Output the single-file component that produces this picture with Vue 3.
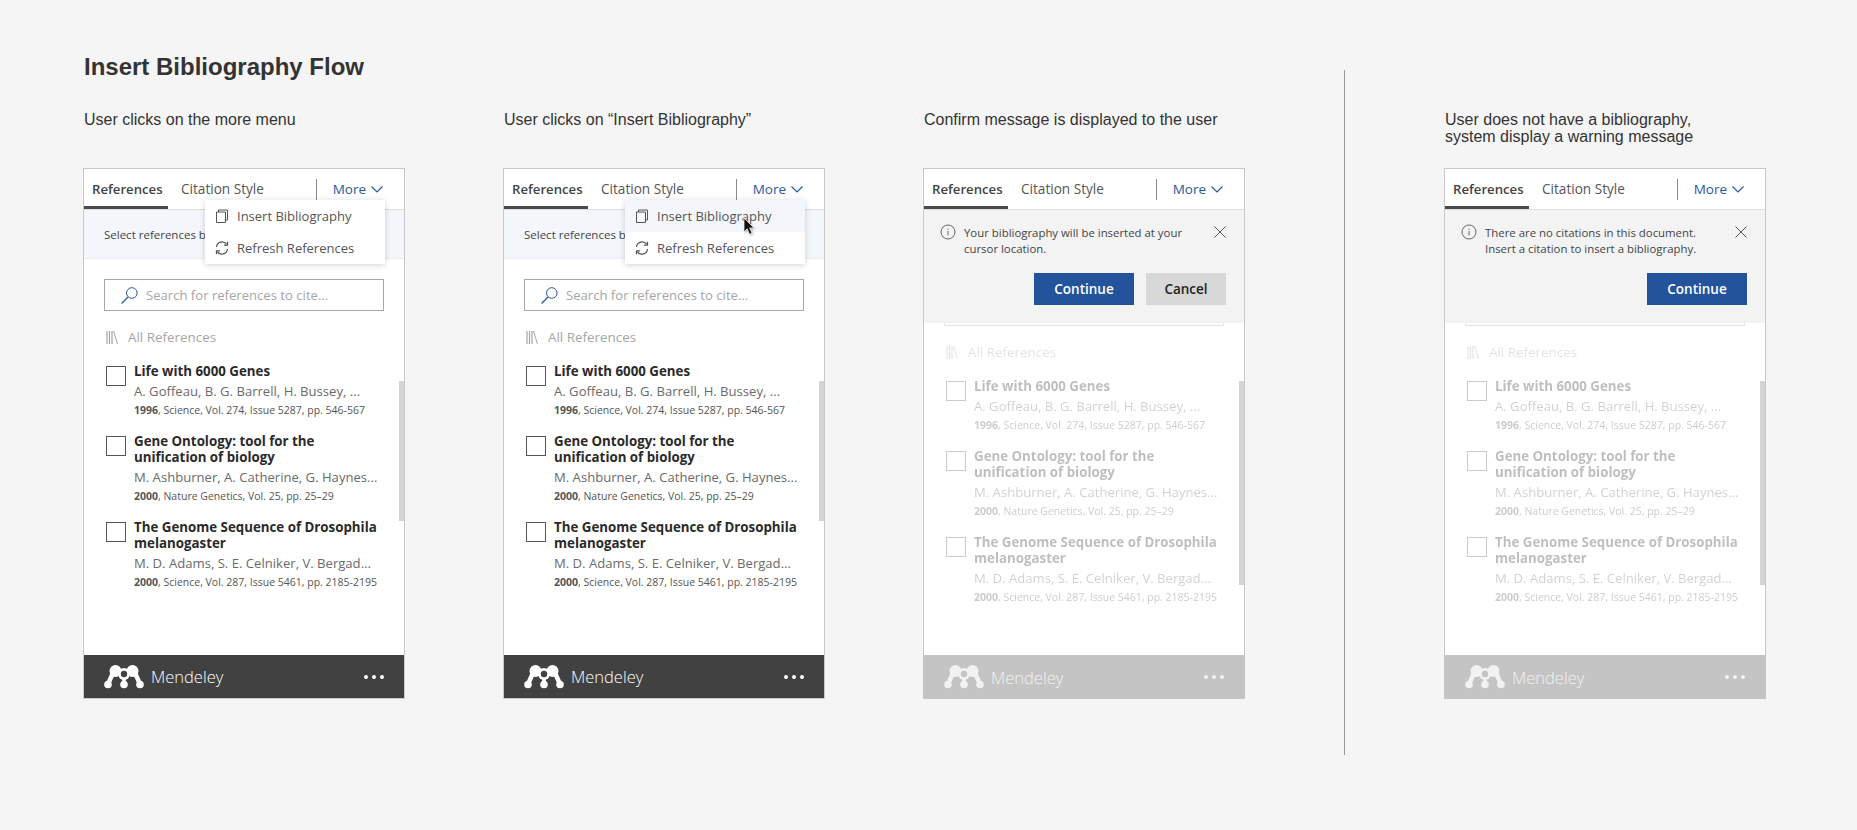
<script setup>
const items = [
  { titulo: 'Life with 6000 Genes', autores: 'A. Goffeau, B. G. Barrell, H. Bussey, ...', anio: '1996', info: ', Science, Vol. 274, Issue 5287, pp. 546-567' },
  { titulo: 'Gene Ontology: tool for the unification of biology', autores: 'M. Ashburner, A. Catherine, G. Haynes...', anio: '2000', info: ', Nature Genetics, Vol. 25, pp. 25–29' },
  { titulo: 'The Genome Sequence of Drosophila melanogaster', autores: 'M. D. Adams, S. E. Celniker, V. Bergad...', anio: '2000', info: ', Science, Vol. 287, Issue 5461, pp. 2185-2195' }
]

const paneles = [
  { caption: 'User clicks on the more menu', menu: true },
  { caption: 'User clicks on “Insert Bibliography”', menu: true, hover: true },
  { caption: 'Confirm message is displayed to the user', mensaje: 'Your bibliography will be inserted at your cursor location.', cancelar: true }
]
const ultimo = {
  caption: 'User does not have a bibliography,\nsystem display a warning message',
  mensaje: 'There are no citations in this document. Insert a citation to insert a bibliography.'
}
const columnas = [paneles, [ultimo]]
</script>

<template>
  <div class="pagina">
    <div v-for="(grupo, g) in columnas" :key="g" :class="['grupo', g === 1 ? 'grupo-final' : '']">
      <h1 v-if="g === 0" class="titulo">Insert Bibliography Flow</h1>
      <div class="fila">
        <div v-for="p in grupo" :key="p.caption" class="columna">
          <p class="caption">{{ p.caption }}</p>
          <div :class="['panel', p.mensaje ? 'panel-dim' : '']">
            <div class="tabs">
              <span class="tab activa">References</span>
              <span class="tab">Citation Style</span>
              <span class="sep"></span>
              <span class="more">More
                <svg width="12" height="7" viewBox="0 0 12 7"><path d="M.5.5 6 6l5.500-5.500" fill="none" stroke="#2b579a" stroke-width="1.200"/></svg>
              </span>
            </div>

            <div class="cuerpo">
              <div v-if="!p.mensaje" class="aviso">Select references below</div>
              <div class="contenido">
                <div class="buscar">
                  <svg width="17" height="17" viewBox="0 0 17 17"><circle cx="10.800" cy="6" r="5.300" fill="none" stroke="#2b579a"/><path d="M7 10 .6 16.500" stroke="#2b579a" stroke-width="1.200"/></svg>
                  <span>Search for references to cite...</span>
                </div>
                <div class="todas">
                  <svg width="12" height="13" viewBox="0 0 12 13"><path d="M1 0v13M3.500 0v13M6 0v13" stroke="#a6a6a6" stroke-width="1.200"/><path d="m7.500 0 4 13" stroke="#a6a6a6"/></svg>
                  <span>All References</span>
                </div>
                <div v-for="it in items" :key="it.titulo" class="item">
                  <span class="check"></span>
                  <div class="texto">
                    <h3>{{ it.titulo }}</h3>
                    <div class="autores">{{ it.autores }}</div>
                    <div class="meta"><b>{{ it.anio }}</b>{{ it.info }}</div>
                  </div>
                </div>
              </div>
              <span :class="['scroll', p.mensaje ? 'scroll-larga' : '']"></span>

              <div v-if="p.menu" class="menu">
                <div :class="['opcion', p.hover ? 'opcion-hover' : '']">
                  <svg width="14" height="14" viewBox="0 0 14 14"><path d="M3.500 3V1h9v10h-2.500" fill="none" stroke="#555"/><path d="M1.500 3h9v10.500h-9z" fill="none" stroke="#555"/></svg>
                  Insert Bibliography
                </div>
                <div class="opcion">
                  <svg width="14" height="14" viewBox="0 0 14 14"><path d="M1.500 6A5.600 5.600 0 0 1 11.600 3.200M12.500 8A5.600 5.600 0 0 1 2.400 10.800" fill="none" stroke="#555" stroke-width="1.200"/><path d="M12.500.8v3.400H9M1.500 13.200V9.800H5" fill="none" stroke="#555" stroke-width="1.200"/></svg>
                  Refresh References
                </div>
              </div>
              <svg v-if="p.hover" class="cursor" width="13" height="19" viewBox="0 0 13 19"><path d="M1 1v14l3.200-3.200 2.300 5.400 2.500-1-2.300-5.200H11z" fill="#111" stroke="#fff" stroke-width=".7"/></svg>

              <div v-if="p.mensaje" class="mensaje">
                <div class="mensaje-fila">
                  <svg class="info" width="16" height="16" viewBox="0 0 16 16"><circle cx="8" cy="8" r="7" fill="none" stroke="#666"/><path d="M8 7v4.500M8 4.500v1.200" stroke="#666"/></svg>
                  <p>{{ p.mensaje }}</p>
                  <svg class="cerrar" width="12" height="12" viewBox="0 0 12 12"><path d="m.5.500 11 11m0-11-11 11" stroke="#555"/></svg>
                </div>
                <div class="botones">
                  <button class="btn continuar">Continue</button>
                  <button v-if="p.cancelar" class="btn cancelar">Cancel</button>
                </div>
              </div>
            </div>

            <div class="pie">
              <svg class="logo" width="40" height="24" viewBox="0 0 40 24">
                <circle cx="11.500" cy="6" r="6"/><circle cx="28.500" cy="6" r="6"/>
                <circle cx="20" cy="9" r="6"/>
                <circle cx="4" cy="19.500" r="3.800"/><circle cx="20" cy="19.500" r="3.800"/><circle cx="36" cy="19.500" r="3.800"/>
                <path d="M9 8 4 19M31 8l5 11" fill="none" stroke="currentColor" stroke-width="4.500"/>
                <path d="M20 12v7" fill="none" stroke="currentColor" stroke-width="3.500"/>
                <circle class="ojo" cx="20" cy="9" r="3.200"/>
              </svg>
              <span class="marca">Mendeley</span>
              <span class="puntos"><i></i><i></i><i></i></span>
            </div>
          </div>
        </div>
      </div>
    </div>
  </div>
</template>

<style scoped>
.pagina {
  display: flex;
  height: 830px;
  padding-left: 83px;
  box-sizing: border-box;
  background: #f5f5f5;
  font-family: "Open Sans", sans-serif;
  color: #333;
  overflow: hidden;
}

.grupo { padding-top: 53px; }

.titulo {
  margin: 0;
  height: 28px;
  padding-left: 1px;
  font: bold 24px/28px "Liberation Sans", sans-serif;
  color: #333;
}

.fila { display: flex; gap: 98px; }
.columna { width: 322px; }

.caption {
  margin: 0;
  height: 87px;
  padding: 30px 0 0 1px;
  box-sizing: border-box;
  font: 16px/17px "Liberation Sans", sans-serif;
  white-space: pre-line;
  color: #333;
}

.grupo-final {
  margin: 70px 0 0 99px;
  padding: 0 0 0 99px;
  height: 685px;
  border-left: 1px solid #9a9a9a;
}
.grupo-final .caption { height: 98px; padding-top: 41px; }

/* panel */
.panel {
  display: flex;
  flex-direction: column;
  height: 531px;
  box-sizing: border-box;
  border: 1px solid #c8c8c8;
  background: #fff;
}

.tabs {
  display: flex;
  flex: none;
  height: 41px;
  box-sizing: border-box;
  border-bottom: 1px solid #ddd;
  align-items: center;
  font-size: 13.600px;
  color: #555;
}
.tab { margin-left: 13px; line-height: 38px; }
.tab.activa {
  align-self: stretch;
  width: 84px;
  margin-left: 0;
  padding-left: 8px;
  box-sizing: border-box;
  border-bottom: 3px solid #4a4a4a;
  font-size: 13.200px;
  font-weight: 600;
  line-height: 40px;
  color: #444;
}
.sep {
  width: 1px;
  height: 21px;
  margin-left: auto;
  background: #8a8a8a;
}
.more {
  display: flex;
  align-items: center;
  gap: 5px;
  margin: 0 21px 0 16px;
  font-size: 13.500px;
  color: #2b579a;
}

.cuerpo {
  position: relative;
  flex: 1;
}

.aviso {
  height: 49px;
  box-sizing: border-box;
  padding: 17px 0 0 20px;
  border-bottom: 1px solid #eee;
  background: #f3f7fc;
  font-size: 11.500px;
  line-height: 16px;
  color: #444;
}

.contenido { padding: 20px 20px 0; }
.panel-dim .contenido { padding-top: 84px; opacity: .3; }

.buscar {
  display: flex;
  align-items: center;
  gap: 8px;
  height: 32px;
  box-sizing: border-box;
  padding-left: 16px;
  border: 1px solid #a6a6a6;
  font-size: 13.100px;
  color: #a6a6a6;
}

.todas {
  display: flex;
  align-items: center;
  gap: 10px;
  height: 20px;
  margin: 16px 0;
  padding-left: 2px;
  font-size: 13.400px;
  color: #a6a6a6;
}

.item {
  display: flex;
  gap: 8px;
  margin-bottom: 15px;
  padding-left: 2px;
}
.check {
  flex: none;
  width: 20px;
  height: 20px;
  margin-top: 3px;
  box-sizing: border-box;
  border: 1px solid #555;
}
.texto h3 {
  margin: 0;
  font-size: 13.300px;
  font-weight: 700;
  line-height: 16px;
  color: #2a2a2a;
}
.autores {
  margin-top: 3px;
  font-size: 13.100px;
  line-height: 18px;
  color: #6a6a6a;
  white-space: nowrap;
}
.meta {
  margin-top: 2px;
  font-size: 10.500px;
  line-height: 16px;
  color: #555;
  white-space: nowrap;
}

.scroll {
  position: absolute;
  top: 171px;
  right: 0;
  width: 5px;
  height: 140px;
  background: #d4d4d4;
}
.scroll-larga { height: 204px; }

/* menu desplegable */
.menu {
  position: absolute;
  top: -10px;
  left: 121px;
  width: 180px;
  background: #fff;
  box-shadow: 0 1px 6px rgba(0, 0, 0, .18);
}
.opcion {
  display: flex;
  align-items: center;
  gap: 8px;
  height: 32px;
  padding-left: 10px;
  font-size: 13px;
  color: #555;
}
.opcion-hover { background: #f3f7fc; }

.cursor {
  position: absolute;
  top: 7px;
  left: 239px;
  filter: drop-shadow(1px 1px 1px rgba(0, 0, 0, .3));
}

/* mensaje de confirmacion */
.mensaje {
  position: absolute;
  top: 0;
  left: 0;
  right: 0;
  display: flex;
  flex-direction: column;
  justify-content: space-between;
  height: 113px;
  box-sizing: border-box;
  padding: 15px 18px 18px 16px;
  background: #f3f3f3;
}
.mensaje-fila { display: flex; gap: 8px; }
.mensaje-fila p {
  flex: 1;
  max-width: 225px;
  margin: 0;
  font-size: 11.400px;
  line-height: 16px;
  color: #444;
}
.info { flex: none; margin-top: -1px; }
.cerrar { flex: none; margin: 1px 0 0 auto; }

.botones { display: flex; justify-content: flex-end; gap: 12px; }
.btn {
  height: 32px;
  border: none;
  font-family: inherit;
  font-size: 13.500px;
  font-weight: 600;
}
.continuar { width: 100px; background: #23539b; color: #fff; }
.cancelar { width: 80px; background: #d8d8d8; color: #222; }

/* pie */
.pie {
  display: flex;
  flex: none;
  align-items: center;
  height: 43px;
  box-sizing: border-box;
  padding: 0 20px;
  background: #414141;
  color: #fff;
}
.panel-dim .pie {
  height: 44px;
  margin: 0 -1px -1px;
  padding: 0 21px;
  background: #c4c4c4;
  color: #f2f2f2;
}
.logo { fill: currentColor; }
.ojo { fill: #414141; }
.panel-dim .ojo { fill: #c4c4c4; }
.marca {
  margin-left: 7px;
  font-size: 16.500px;
  font-weight: 300;
}
.puntos {
  display: flex;
  gap: 4px;
  margin-left: auto;
}
.puntos i {
  width: 4px;
  height: 4px;
  border-radius: 50%;
  background: currentColor;
}
</style>
